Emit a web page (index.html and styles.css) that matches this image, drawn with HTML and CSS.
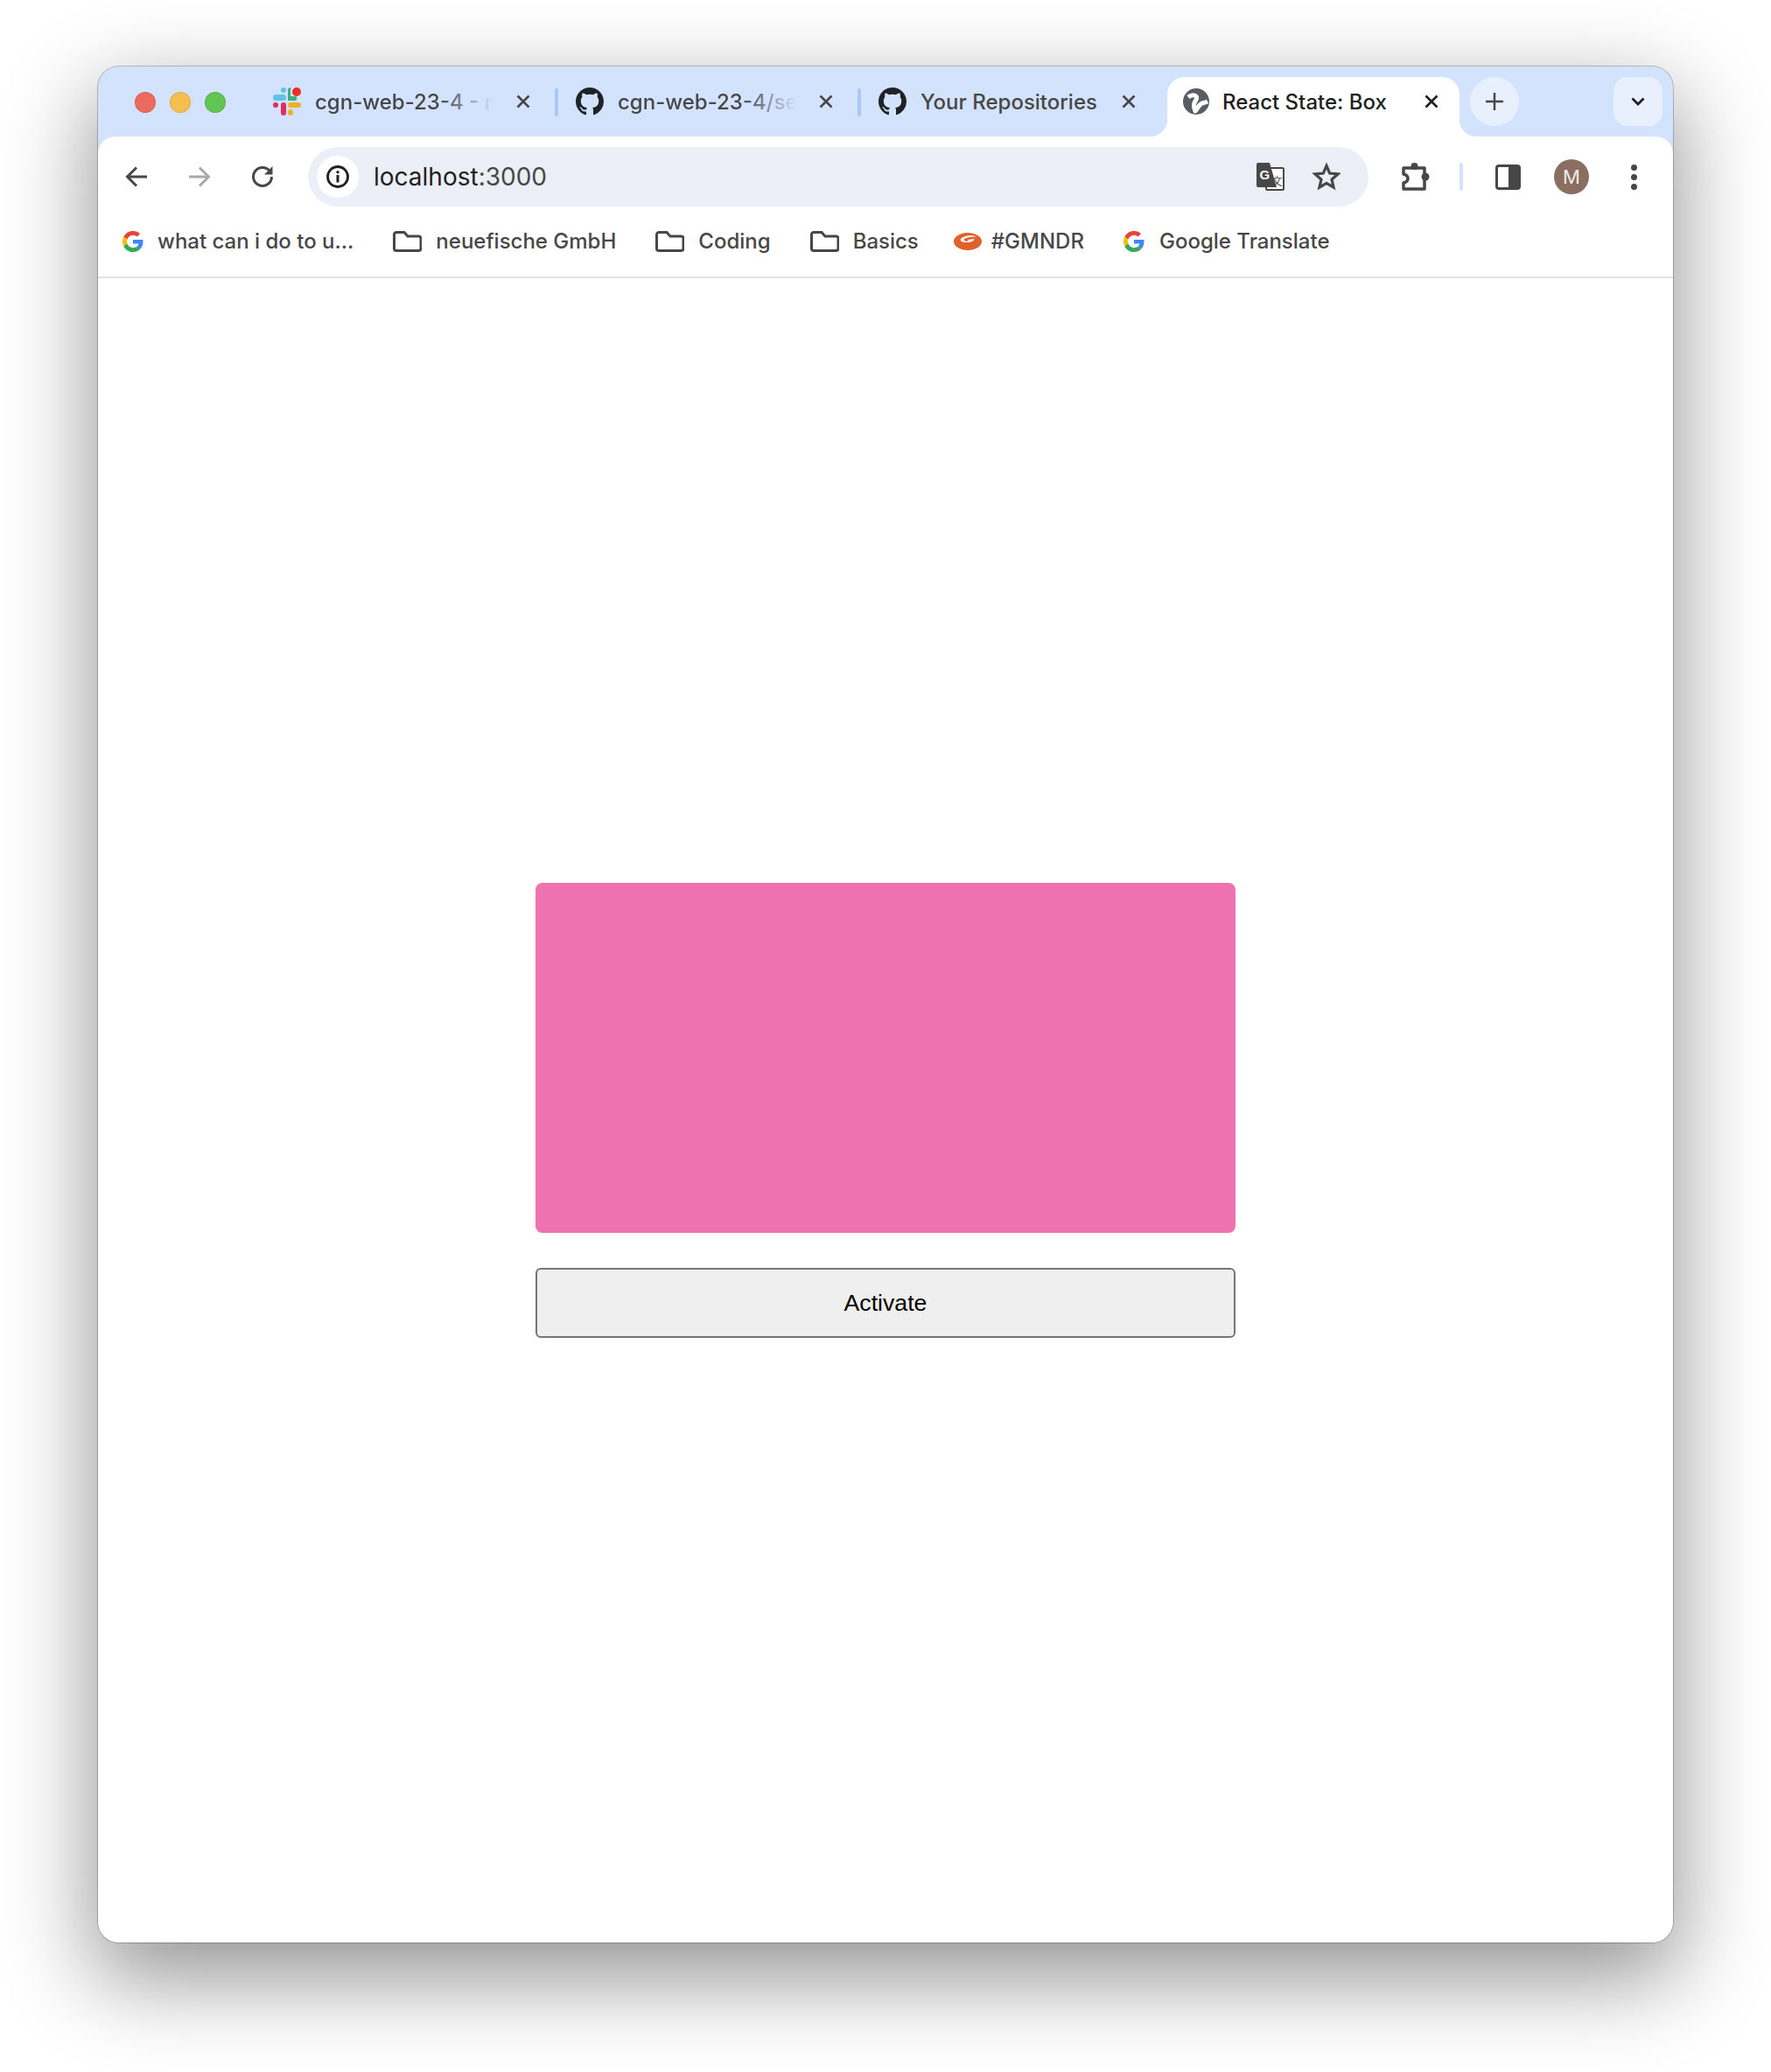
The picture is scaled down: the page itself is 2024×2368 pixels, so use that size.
FILE: index.html
```html
<!DOCTYPE html>
<html>
<head>
    <title>React State: Box</title>
    <link rel="stylesheet" href="styles.css">
</head>
<body>
    <svg class="defs" width="0" height="0">
        <symbol id="github" viewBox="0 0 16 16"><path fill="#1f2328" d="M8 0C3.58 0 0 3.58 0 8c0 3.54 2.29 6.53 5.47 7.59.4.07.55-.17.55-.38 0-.19-.01-.82-.01-1.49-2.01.37-2.53-.49-2.69-.94-.09-.23-.48-.94-.82-1.13-.28-.15-.68-.52-.01-.53.63-.01 1.08.58 1.23.82.72 1.21 1.87.87 2.33.66.07-.52.28-.87.51-1.07-1.78-.2-3.64-.89-3.64-3.95 0-.87.31-1.59.82-2.15-.08-.2-.36-1.02.08-2.12 0 0 .67-.21 2.2.82.64-.18 1.32-.27 2-.27.68 0 1.36.09 2 .27 1.53-1.04 2.2-.82 2.2-.82.44 1.1.16 1.92.08 2.12.51.56.82 1.27.82 2.15 0 3.07-1.87 3.75-3.65 3.95.29.25.54.73.54 1.48 0 1.07-.01 1.93-.01 2.2 0 .21.15.46.55.38A8.013 8.013 0 0016 8c0-4.42-3.58-8-8-8z"/></symbol>
        <symbol id="close" viewBox="0 0 16 16"><path d="M1.5 1.5l13 13M14.5 1.5l-13 13" fill="none" stroke="currentColor" stroke-width="2.6"/></symbol>
        <symbol id="folder" viewBox="0 0 33 24"><path d="M1.5 4A2.5 2.5 0 0 1 4 1.5h9l4 4.5h12.500A2.500 2.500 0 0 1 32 8.500V20a2.500 2.500 0 0 1-2.500 2.500H4A2.500 2.500 0 0 1 1.500 20z" fill="none" stroke="#474747" stroke-width="3"/></symbol>
        <symbol id="google" viewBox="0 0 48 48">
            <path fill="#EA4335" d="M24 9.5c3.54 0 6.71 1.22 9.21 3.6l6.85-6.85C35.9 2.38 30.47 0 24 0 14.62 0 6.51 5.38 2.56 13.22l7.98 6.19C12.43 13.72 17.74 9.5 24 9.5z"/>
            <path fill="#4285F4" d="M46.98 24.55c0-1.57-.15-3.09-.38-4.55H24v9.02h12.94c-.58 2.96-2.26 5.48-4.78 7.18l7.73 6c4.51-4.18 7.09-10.36 7.09-17.65z"/>
            <path fill="#FBBC05" d="M10.53 28.59c-.48-1.45-.76-2.99-.76-4.59s.27-3.14.76-4.59l-7.98-6.19C.92 16.46 0 20.12 0 24c0 3.88.92 7.54 2.56 10.78l7.97-6.19z"/>
            <path fill="#34A853" d="M24 48c6.48 0 11.93-2.13 15.89-5.81l-7.73-6c-2.15 1.45-4.92 2.3-8.16 2.3-6.26 0-11.57-4.22-13.47-9.91l-7.98 6.19C6.51 42.62 14.62 48 24 48z"/>
        </symbol>
    </svg>

    <div class="window">
        <div class="tabstrip">
            <div class="lights">
                <span class="light red"></span>
                <span class="light yellow"></span>
                <span class="light green"></span>
            </div>

            <div class="tab">
                <svg class="favicon" viewBox="0 0 32 32">
                    <rect x="0" y="8" width="15" height="7" rx="3.5" fill="#5fc3e8"/>
                    <rect x="9" y="0" width="6" height="6" rx="3" fill="#5fc3e8"/>
                    <path d="M20 0a3 3 0 0 0-3 3v12h9a3 3 0 0 0 0-5h-6V3a3 3 0 0 0 0-3z" fill="#3fae82"/>
                    <circle cx="27" cy="5" r="5" fill="#ee2f24"/>
                    <rect x="0" y="17" width="6" height="6" rx="3" fill="#dc2f5e"/>
                    <rect x="9" y="17" width="6" height="15" rx="3" fill="#dc2f5e"/>
                    <rect x="17" y="17" width="15" height="6" rx="3" fill="#ecb22e"/>
                    <rect x="17" y="25" width="6" height="7" rx="3" fill="#ecb22e"/>
                </svg>
                <span class="title fade">cgn-web-23-4 - neuefische</span>
                <svg class="close"><use href="#close"/></svg>
            </div>
            <span class="tab-sep"></span>
            <div class="tab">
                <svg class="favicon"><use href="#github"/></svg>
                <span class="title fade">cgn-web-23-4/session-notes</span>
                <svg class="close"><use href="#close"/></svg>
            </div>
            <span class="tab-sep"></span>
            <div class="tab">
                <svg class="favicon"><use href="#github"/></svg>
                <span class="title">Your Repositories</span>
                <svg class="close"><use href="#close"/></svg>
            </div>

            <div class="tab active">
                <svg class="globe" viewBox="0 0 30 30">
                    <circle cx="15" cy="15" r="15" fill="#585c63"/>
                    <path d="M6 10C11 6 18 8 15 13 13 16 11 19 14 26 17 23 18 18 22 17 24 16.500 26 16 28 15" fill="none" stroke="#fff" stroke-width="5" stroke-linejoin="round"/>
                </svg>
                <span class="title">React State: Box</span>
                <svg class="close"><use href="#close"/></svg>
            </div>

            <div class="new-tab">
                <svg width="20" height="20" viewBox="0 0 20 20"><path d="M10 0v20M0 10h20" stroke="#474747" stroke-width="2.5"/></svg>
            </div>
            <div class="tab-search">
                <svg width="16" height="10" viewBox="0 0 16 10"><path d="M1.5 1.5 8 8l6.5-6.5" fill="none" stroke="#1f1f1f" stroke-width="2.8"/></svg>
            </div>
        </div>

        <div class="browser">
            <div class="toolbar">
                <div class="nav-btn">
                    <svg width="26" height="24" viewBox="0 0 26 24"><path d="M25 12H3M13 1.5 2.5 12 13 22.5" fill="none" stroke="#474747" stroke-width="3"/></svg>
                </div>
                <div class="nav-btn">
                    <svg width="26" height="24" viewBox="0 0 26 24"><path d="M1 12h22M13 1.5 23.5 12 13 22.5" fill="none" stroke="#a9a9a9" stroke-width="3"/></svg>
                </div>
                <div class="nav-btn">
                    <svg width="26" height="26" viewBox="0 0 26 26"><path d="M22 7.5A10.500 10.500 0 1 0 23.500 13" fill="none" stroke="#474747" stroke-width="3"/><path d="M24.500 1v9.500H15z" fill="#474747"/></svg>
                </div>

                <div class="omnibox">
                    <div class="site-chip">
                        <svg width="26" height="26" viewBox="0 0 26 26">
                            <circle cx="13" cy="13" r="11.5" fill="none" stroke="#1f1f1f" stroke-width="2.8"/>
                            <circle cx="13" cy="7.8" r="1.7" fill="#1f1f1f"/>
                            <path d="M13 11v8.5" stroke="#1f1f1f" stroke-width="3"/>
                        </svg>
                    </div>
                    <span class="url">localhost<span class="port">:3000</span></span>
                    <svg class="translate" width="32" height="32" viewBox="0 0 32 32">
                        <rect x="11" y="6" width="20" height="25" rx="1.5" fill="#fff" stroke="#474747" stroke-width="2"/>
                        <path d="M2 0h13l8 28H2a2 2 0 0 1-2-2V2a2 2 0 0 1 2-2z" fill="#474747"/>
                        <text x="3.5" y="19" class="translate-g">G</text>
                        <text x="17.5" y="26" class="translate-x">文</text>
                    </svg>
                    <svg class="star" width="32" height="32" viewBox="0 0 32 32"><path d="M16 3.500l3.700 8.600 9.300.8-7 6.100 2.100 9.100-8.100-4.800-8.100 4.800 2.100-9.100-7-6.100 9.300-.8z" fill="none" stroke="#474747" stroke-width="3.2"/></svg>
                </div>

                <svg class="extensions" width="33" height="32" viewBox="0 0 33 32">
                    <path d="M3 6H27V30H3V23C7 22 8 20 8 18 8 16 7 14 3 13Z" fill="none" stroke="#474747" stroke-width="3.5" stroke-linejoin="round"/>
                    <circle cx="15.5" cy="4" r="4" fill="#474747"/>
                    <circle cx="28" cy="16" r="4.5" fill="#474747"/>
                </svg>
                <span class="toolbar-sep"></span>
                <svg class="side-panel" width="29" height="29" viewBox="0 0 29 29"><rect x="1.5" y="1.5" width="26" height="26" rx="2.5" fill="none" stroke="#474747" stroke-width="3"/><path d="M15 1.5h10a2.500 2.500 0 0 1 2.500 2.500v21a2.500 2.500 0 0 1-2.500 2.500H15z" fill="#474747"/></svg>
                <div class="avatar">M</div>
                <div class="menu-dots"><span></span><span></span><span></span></div>
            </div>

            <div class="bookmarks">
                <div class="bookmark first">
                    <svg class="bm-icon"><use href="#google"/></svg>
                    <span>what can i do to u...</span>
                </div>
                <div class="bookmark">
                    <svg class="bm-folder"><use href="#folder"/></svg>
                    <span>neuefische GmbH</span>
                </div>
                <div class="bookmark">
                    <svg class="bm-folder"><use href="#folder"/></svg>
                    <span>Coding</span>
                </div>
                <div class="bookmark">
                    <svg class="bm-folder"><use href="#folder"/></svg>
                    <span>Basics</span>
                </div>
                <div class="bookmark gmndr">
                    <svg width="32" height="20" viewBox="0 0 32 20">
                        <ellipse cx="16" cy="10" rx="16" ry="10" fill="#e0622a"/>
                        <path d="M26 4.500C21 2 11 3 8 7c-2 3 4 4.500 9 4 3-.3 6-1.500 6.500-4L15.500 8l1.500 1.500c-3 .5-5.500 0-5.500-1.500 1-2.500 9-3.500 14.500-3.500z" fill="#fff"/>
                    </svg>
                    <span>#GMNDR</span>
                </div>
                <div class="bookmark last">
                    <svg class="bm-icon"><use href="#google"/></svg>
                    <span>Google Translate</span>
                </div>
            </div>

            <main class="page">
                <div class="box"></div>
                <button class="activate" type="button">Activate</button>
            </main>
        </div>
    </div>
</body>
</html>
```

FILE: styles.css
```css
html,
body {
    margin: 0;
    background-color: #fff;
}

body {
    height: 2368px;
    padding-top: 76px;
    box-sizing: border-box;
    overflow: hidden;
    font-family: Inter, "Noto Sans", sans-serif;
}

.defs {
    display: block;
    height: 0;
}

.window {
    display: flex;
    flex-direction: column;
    width: 1800px;
    height: 2144px;
    margin-left: 112px;
    border-radius: 24px;
    background-color: #d3e3fd;
    overflow: hidden;
    box-shadow: 0 0 0 1px rgba(0, 0, 0, 0.22), 0 36px 100px 6px rgba(0, 0, 0, 0.42);
}

/* tab strip */
.tabstrip {
    display: flex;
    align-items: flex-start;
    height: 80px;
    padding-top: 12px;
    box-sizing: border-box;
    flex-shrink: 0;
}

.lights {
    display: flex;
    gap: 16px;
    width: 180px;
    padding: 17px 0 0 42px;
    box-sizing: border-box;
}

.light {
    width: 24px;
    height: 24px;
    box-sizing: border-box;
    border: 1px solid rgba(0, 0, 0, 0.1);
    border-radius: 50%;
}

.light.red {
    background-color: #ed6a5e;
}

.light.yellow {
    background-color: #f5bf4f;
}

.light.green {
    background-color: #62c554;
}

.tab {
    display: flex;
    align-items: center;
    width: 342px;
    height: 56px;
    padding-left: 20px;
    box-sizing: border-box;
    color: #474747;
    font-size: 24px;
    font-weight: 500;
    position: relative;
}

.favicon {
    width: 32px;
    height: 32px;
    flex-shrink: 0;
    margin-right: 16px;
}

.title {
    width: 204px;
    white-space: nowrap;
    overflow: hidden;
}

.title.fade {
    -webkit-mask-image: linear-gradient(to right, #000 70%, transparent 100%);
    mask-image: linear-gradient(to right, #000 70%, transparent 100%);
}

.close {
    width: 16px;
    height: 16px;
    margin-left: 26px;
    flex-shrink: 0;
    color: #474747;
}

.tab-sep {
    width: 4px;
    height: 32px;
    margin-top: 13px;
    border-radius: 2px;
    background-color: #a8c7fa;
}

.tab.active {
    width: 334px;
    height: 68px;
    margin-left: 8px;
    padding-left: 18px;
    padding-bottom: 12px;
    border-radius: 20px 20px 0 0;
    background-color: #fff;
    color: #1f1f1f;
}

.tab.active::before,
.tab.active::after {
    content: "";
    position: absolute;
    bottom: 0;
    width: 20px;
    height: 20px;
}

.tab.active::before {
    left: -20px;
    background: radial-gradient(circle at 0 0, transparent 20px, #fff 20.5px);
}

.tab.active::after {
    right: -20px;
    background: radial-gradient(circle at 100% 0, transparent 20px, #fff 20.5px);
}

.globe {
    width: 30px;
    height: 30px;
    margin-right: 15px;
    flex-shrink: 0;
}

.tab.active .title {
    width: 191px;
}

.tab.active .close {
    margin-left: 40px;
    color: #1f1f1f;
}

.new-tab,
.tab-search {
    display: flex;
    align-items: center;
    justify-content: center;
    width: 56px;
    height: 56px;
    background-color: #e9f0fd;
}

.new-tab {
    margin-left: 12px;
    border-radius: 50%;
}

.tab-search {
    margin-left: auto;
    margin-right: 12px;
    border-radius: 16px;
}

/* toolbar + page */
.browser {
    display: flex;
    flex-direction: column;
    flex: 1;
    min-height: 0;
    border-radius: 20px 20px 0 0;
    background-color: #fff;
    position: relative;
}

.toolbar {
    display: flex;
    align-items: center;
    height: 92px;
    padding-left: 8px;
    box-sizing: border-box;
    flex-shrink: 0;
}

.nav-btn {
    display: flex;
    align-items: center;
    justify-content: center;
    width: 72px;
}

.omnibox {
    display: flex;
    align-items: center;
    width: 1212px;
    height: 68px;
    margin-left: 16px;
    padding: 0 32px 0 10px;
    box-sizing: border-box;
    border-radius: 34px;
    background-color: #eceff8;
}

.site-chip {
    display: flex;
    align-items: center;
    justify-content: center;
    width: 48px;
    height: 48px;
    margin-right: 17px;
    border-radius: 50%;
    background-color: #fff;
}

.url {
    color: #1f1f1f;
    font-size: 28px;
}

.port {
    color: #474747;
}

.translate {
    margin-left: auto;
}

.translate-g {
    font-family: "Liberation Sans", sans-serif;
    font-size: 15px;
    font-weight: 700;
    fill: #fff;
}

.translate-x {
    font-family: "Noto Sans CJK SC", sans-serif;
    font-size: 12px;
    fill: #474747;
}

.star {
    margin-left: 32px;
}

.extensions {
    margin-left: 37px;
}

.toolbar-sep {
    width: 4px;
    height: 32px;
    margin-left: 34px;
    border-radius: 2px;
    background-color: #d3e3fd;
}

.side-panel {
    margin-left: 37px;
}

.avatar {
    display: flex;
    align-items: center;
    justify-content: center;
    width: 40px;
    height: 40px;
    margin-left: 38px;
    border-radius: 50%;
    background-color: #8a6e62;
    color: #f1ebe8;
    font-size: 22px;
}

.menu-dots {
    display: flex;
    flex-direction: column;
    gap: 4px;
    margin-left: 48px;
}

.menu-dots span {
    width: 7px;
    height: 7px;
    border-radius: 50%;
    background-color: #474747;
}

/* bookmarks */
.bookmarks {
    display: flex;
    align-items: center;
    height: 70px;
    padding-left: 28px;
    padding-bottom: 12px;
    box-sizing: border-box;
    border-bottom: 2px solid #e2e2e2;
    color: #474747;
    font-size: 24px;
    font-weight: 500;
    flex-shrink: 0;
}

.bookmark {
    display: flex;
    align-items: center;
    gap: 16px;
    margin-left: 45px;
    white-space: nowrap;
}

.bookmark span {
    padding-bottom: 2px;
}

.bookmark.first {
    margin-left: 0;
}

.bookmark.gmndr {
    gap: 11px;
    margin-left: 40px;
}

.bookmark.last {
    gap: 17px;
}

.bm-icon {
    width: 24px;
    height: 24px;
}

.bm-folder {
    width: 33px;
    height: 24px;
}

/* the app itself */
.page {
    display: flex;
    flex: 1;
    flex-direction: column;
    align-items: center;
    justify-content: center;
    gap: 40px;
}

.box {
    width: 800px;
    height: 400px;
    border-radius: 8px;
    background-color: #ee72b0;
}

.activate {
    width: 800px;
    height: 80px;
    box-sizing: border-box;
    border: 2px solid #767676;
    border-radius: 6px;
    background-color: #efefef;
    color: #000;
    font-family: "Liberation Sans", Arial, sans-serif;
    font-size: 26.67px;
}
```
